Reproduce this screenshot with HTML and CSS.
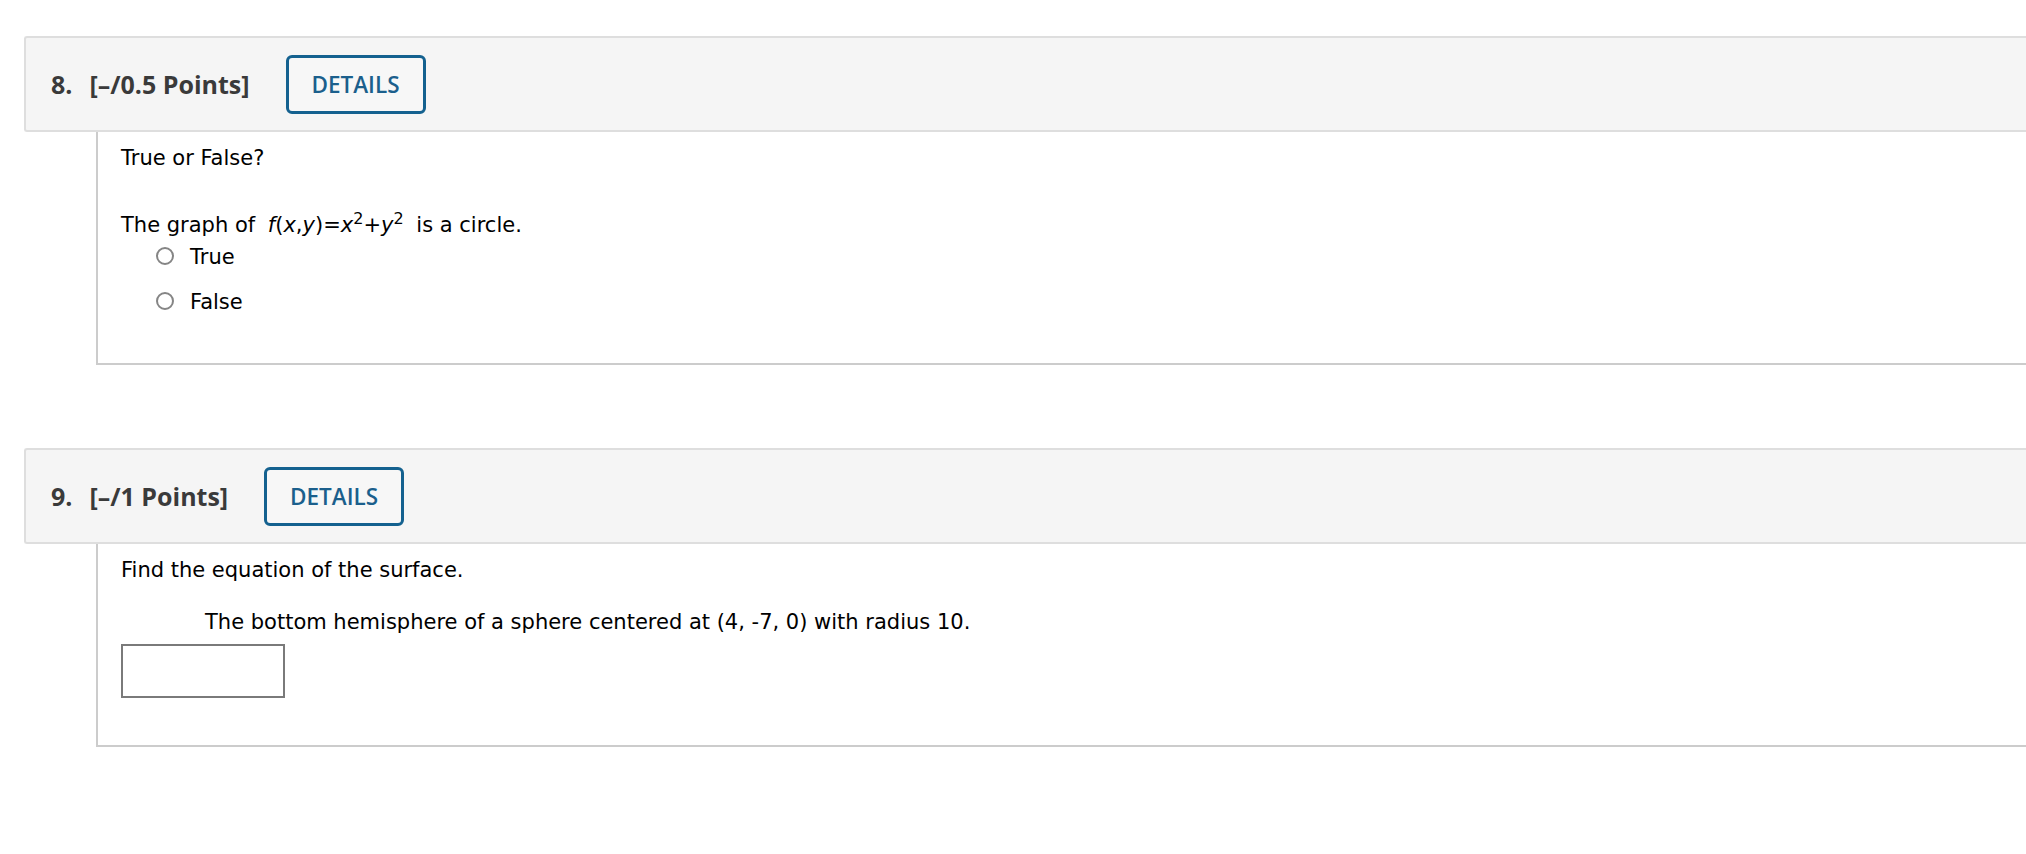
FILE: index.html
```html
<!DOCTYPE html>
<html>
<head>
<meta charset="utf-8">
<link rel="stylesheet" href="styles.css">
</head>
<body>
<div class="page">
  <section class="question q8">
    <div class="q-head">
      <span class="q-num">8.</span>
      <span class="q-points">[–/0.5 Points]</span>
      <button class="details-btn">DETAILS</button>
    </div>
    <div class="q-body body-8">
      <p class="line">True or False?</p>
      <p class="line stmt">The graph of <span class="math"><i>f</i>(<i>x</i>,<i>y</i>)=<i>x</i><sup>2</sup>+<i>y</i><sup>2</sup></span> is a circle.</p>
      <div class="options">
        <label class="option"><span class="radio"></span><span>True</span></label>
        <label class="option"><span class="radio"></span><span>False</span></label>
      </div>
    </div>
  </section>

  <section class="question q9">
    <div class="q-head">
      <span class="q-num">9.</span>
      <span class="q-points">[–/1 Points]</span>
      <button class="details-btn">DETAILS</button>
    </div>
    <div class="q-body body-9">
      <p class="line">Find the equation of the surface.</p>
      <p class="line indent">The bottom hemisphere of a sphere centered at (4, -7, 0) with radius 10.</p>
      <div class="answer-box"></div>
    </div>
  </section>
</div>
</body>
</html>
```

FILE: styles.css
```css
html, body {
  margin: 0;
  padding: 0;
  background: #ffffff;
  overflow: hidden;
}

.page {
  padding-top: 36px;
  display: flex;
  flex-direction: column;
  gap: 83px;
}

.question {
  margin-left: 24px;
}

.q-head {
  display: flex;
  align-items: center;
  height: 92px;
  background: #f5f5f5;
  border: 2px solid #dedede;
  border-right: none;
  border-radius: 3px 0 0 3px;
  padding-left: 25px;
  font-family: "Open Sans", "DejaVu Sans", sans-serif;
  font-weight: 700;
  font-size: 25px;
  color: #3a3a3a;
}

.q-num {
  margin-right: 17px;
}

.details-btn {
  margin-left: 36px;
  height: 59px;
  width: 140px;
  border: 3px solid #14618f;
  border-radius: 6px;
  background: #f7f7f7;
  color: #1b5f8c;
  font-family: "Open Sans", "DejaVu Sans", sans-serif;
  font-weight: 600;
  font-size: 22.5px;
  padding: 0;
}

.q-body {
  margin-left: 72px;
  border-left: 2px solid #cccccc;
  border-bottom: 2px solid #cccccc;
  font-family: "DejaVu Sans", Verdana, sans-serif;
  font-size: 21px;
  line-height: 24px;
  color: #000;
}

.line {
  margin: 0;
}

.body-8 {
  padding: 14px 0 49px 23px;
}

.body-8 .stmt {
  margin-top: 43px;
}

.math {
  margin-left: 6px;
  margin-right: 6px;
}

.math i {
  font-style: italic;
}

.math sup {
  font-size: 16px;
  line-height: 0;
  vertical-align: 8px;
}

.options {
  display: flex;
  flex-direction: column;
  gap: 21px;
  margin-top: 8px;
  padding-left: 35px;
}

.option {
  display: flex;
  align-items: center;
  gap: 16px;
  height: 24px;
}

.radio {
  flex: none;
  box-sizing: border-box;
  display: inline-block;
  width: 18px;
  height: 18px;
  border: 2px solid #858585;
  border-radius: 50%;
  background: #fff;
  margin-top: -3px;
}

.body-9 {
  padding: 14px 0 47px 23px;
}

.body-9 .indent {
  margin-top: 28px;
  padding-left: 84px;
}

.answer-box {
  margin-top: 10px;
  box-sizing: border-box;
  width: 164px;
  height: 54px;
  border: 2px solid #7a7a7a;
  background: #fff;
}
```
